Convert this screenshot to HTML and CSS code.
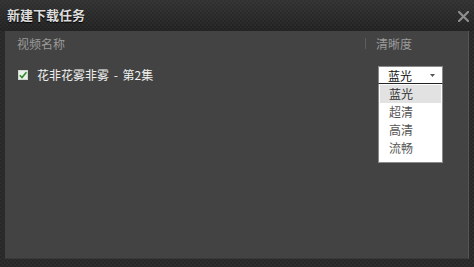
FILE: index.html
```html
<!DOCTYPE html>
<html lang="zh">
<head>
<meta charset="utf-8">
<link rel="stylesheet" href="styles.css">
</head>
<body>
<div class="dialog">
  <div class="titlebar">
    <span class="title">新建下载任务</span>
    <span class="close" aria-label="关闭">
      <svg width="11" height="11" viewBox="0 0 11 11"><path d="M1 1 L10 10 M10 1 L1 10" stroke="#8e8e8e" stroke-width="2.2" stroke-linecap="square"/></svg>
    </span>
  </div>
  <div class="panel">
    <div class="header">
      <span class="col-name">视频名称</span>
      <span class="sep"></span>
      <span class="col-quality">清晰度</span>
    </div>
    <div class="row">
      <span class="check">
        <svg width="10" height="10" viewBox="0 0 10 10"><path d="M1.8 5.2 L4 7.6 L8.4 2.2" fill="none" stroke="#2f8a2f" stroke-width="1.6"/></svg>
      </span>
      <span class="name">花非花雾非雾 <span class="dash">-</span> 第2集</span>
      <div class="select">
        <div class="select-box">
          <span>蓝光</span>
          <svg class="arrow" width="5" height="3" viewBox="0 0 5 3"><path d="M0 0 H5 L2.5 3 Z" fill="#555"/></svg>
        </div>
        <ul class="options">
          <li class="active">蓝光</li>
          <li>超清</li>
          <li>高清</li>
          <li>流畅</li>
        </ul>
      </div>
    </div>
  </div>
</div>
</body>
</html>
```

FILE: styles.css
```css
* { box-sizing: border-box; }
html, body { margin: 0; padding: 0; }
body {
  width: 474px;
  height: 267px;
  overflow: hidden;
  font-family: "Noto Sans CJK SC", "Liberation Sans", sans-serif;
  font-size: 12px;
  background-color: #2b2b2b;
  background-image: repeating-conic-gradient(#2e2e2e 0 25%, #272727 0 50%);
  background-size: 4px 4px;
}
.dialog {
  display: flex;
  flex-direction: column;
  height: 267px;
}
.titlebar {
  height: 31px;
  display: flex;
  align-items: center;
  justify-content: space-between;
  padding: 0 5px 2px 7px;
  background-image: linear-gradient(rgba(70,70,70,0.35), rgba(0,0,0,0.15));
}
.title {
  color: #dcdcdc;
  font-weight: bold;
  font-size: 13px;
  text-shadow: 0 1px 1px #000;
}
.close { display: flex; margin-top: 3px; }
.panel {
  margin: 0 5px;
  height: 228px;
  background: #434343;
  border-right: 1px solid #555;
  border-bottom: 1px solid #3a3a3a;
}
.header {
  height: 25px;
  display: flex;
  align-items: center;
  padding-left: 12px;
  color: #9a9a9a;
}
.col-name { flex: 1; }
.sep {
  width: 1px;
  height: 11px;
  background: #5e5e5e;
  margin-right: 10px;
}
.col-quality { width: 92px; }
.row {
  display: flex;
  align-items: center;
  height: 38px;
  padding-left: 13px;
  padding-bottom: 1px;
}
.check {
  width: 10px;
  height: 10px;
  background: #e9efe9;
  border: 1px solid #cfd6cf;
  display: flex;
  margin-right: 9px;
}
.check svg { margin: -1px; }
.name {
  color: #f0f0f0;
  flex: 1;
}
.dash { margin: 0 2px; }
.select {
  position: relative;
  width: 65px;
  margin-right: 25px;
  margin-top: 1px;
}
.select-box {
  height: 18px;
  background: #fff;
  border: 1px solid #8a8a8a;
  display: flex;
  align-items: center;
  justify-content: space-between;
  padding: 0 7px 0 9px;
  color: #111;
}
.arrow { margin-top: 1px; }
.options {
  position: absolute;
  top: 17px;
  left: 0;
  width: 65px;
  margin: 0;
  padding: 1px 1px 5px;
  list-style: none;
  background: #fff;
  border: 1px solid #8a8a8a;
  border-top: 1px solid #222;
}
.options li {
  height: 18px;
  line-height: 18px;
  padding-left: 9px;
  color: #555;
}
.options li.active {
  background: #e2e2e2;
  color: #333;
}
```
